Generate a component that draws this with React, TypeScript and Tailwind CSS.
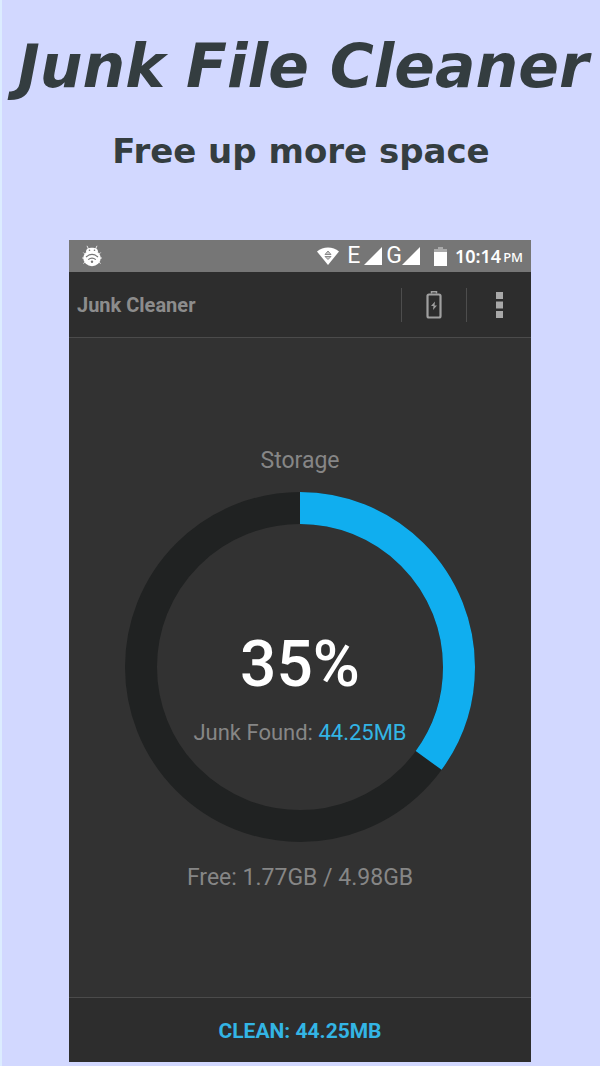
const USED_PERCENT = 35;
const JUNK_SIZE = "44.25MB";

function BugIcon() {
  return (
    <svg viewBox="0 0 22 24" className="h-6 w-[22px]" aria-hidden="true">
      <g stroke="#e4e4e4" strokeWidth="1" fill="none">
        <path d="M6 1.800l1.800 4M16 1.800l-1.800 4M2.300 8.500l2 2M19.700 8.500l-2 2M1 14h2M21 14h-2M2.300 19.500l2-1.500M19.700 19.500l-2-1.500" />
      </g>
      <path d="M5 8C5 4.500 8 3.800 11 3.800S17 4.500 17 8z" fill="#fff" />
      <ellipse cx="11" cy="14.200" rx="8.700" ry="8" fill="#fff" />
      <g stroke="#767676" strokeWidth="1.200" fill="none">
        <path d="M5 13c3.800-3.200 8.200-3.200 12 0M7.200 15.600c2.400-2 5.200-2 7.600 0" />
      </g>
      <circle cx="11" cy="17.800" r="1.200" fill="#767676" />
      <circle cx="8.500" cy="6.300" r=".8" fill="#767676" />
      <circle cx="13.500" cy="6.300" r=".8" fill="#767676" />
    </svg>
  );
}

function WifiIcon() {
  return (
    <svg viewBox="0 0 22 18" className="h-[18px] w-[22px]" aria-hidden="true">
      <path d="M0 4.500C6-1 16-1 22 4.500L11 18z" fill="#fff" />
      <path d="M11 4l3 3.500H8zM8 9.500h6l-3 3z" fill="#c4c4c4" stroke="#8a8a8a" strokeWidth="1" />
    </svg>
  );
}

function SignalIcon() {
  return (
    <svg viewBox="0 0 18 18" className="h-[18px] w-[18px]" aria-hidden="true">
      <path d="M18 0v18H0z" fill="#fff" />
    </svg>
  );
}

function StatusBatteryIcon() {
  return (
    <svg viewBox="0 0 13 19" className="h-[19px] w-[13px]" aria-hidden="true">
      <path d="M4 0h5v2h4v4H0V2h4z" fill="#aaa" />
      <path d="M0 5h13v14H0z" fill="#fff" />
    </svg>
  );
}

function BatteryIcon() {
  return (
    <svg viewBox="0 0 16 28" className="h-7 w-4" aria-hidden="true">
      <g fill="none" stroke="#a0a0a0">
        <rect x="1.500" y="3.500" width="13" height="23" rx="1.500" strokeWidth="2.200" />
        <path d="M5.500 2.500V.8h5v1.700" strokeWidth="1.500" />
      </g>
      <path d="M9 10.500l-4 4.500h2.500L7 19l4-4.500H8.500z" fill="#a0a0a0" />
    </svg>
  );
}

function MoreIcon() {
  return (
    <svg viewBox="0 0 7 26" className="h-[26px] w-[7px]" aria-hidden="true">
      <path d="M0 0h7v7H0zM0 9.500h7v7H0zM0 19h7v7H0z" fill="#a8a8a8" />
    </svg>
  );
}

function StatusBar() {
  return (
    <div className="flex h-8 items-center justify-between bg-[#767676] pl-3 pr-2 font-['Noto_Sans',sans-serif] text-white">
      <BugIcon />
      <div className="flex items-center">
        <WifiIcon />
        <span className="ml-2 font-[Roboto,sans-serif] text-[23px] leading-8">E</span>
        <span className="ml-1">
          <SignalIcon />
        </span>
        <span className="ml-1 font-[Roboto,sans-serif] text-[23px] leading-8">G</span>
        <SignalIcon />
        <span className="ml-3.5 mr-2">
          <StatusBatteryIcon />
        </span>
        <span className="text-[18px] font-semibold leading-8">10:14</span>
        <span className="ml-0.5 pt-1 text-[13px] font-medium">PM</span>
      </div>
    </div>
  );
}

function Toolbar() {
  return (
    <header className="flex h-[66px] items-center border-b border-[#4b4b4b] bg-[#2d2d2d] pl-2">
      <h2 className="flex-1 pt-px text-[20px] font-bold text-[#8c8c8c]">Junk Cleaner</h2>
      <button
        type="button"
        aria-label="Battery"
        className="flex h-[34px] w-[65px] items-center justify-center border-l border-[#4d4d4d]"
      >
        <BatteryIcon />
      </button>
      <button
        type="button"
        aria-label="More options"
        className="flex h-[34px] w-[65px] items-center justify-center border-l border-[#4d4d4d]"
      >
        <MoreIcon />
      </button>
    </header>
  );
}

function StorageRing({ percent }: { percent: number }) {
  return (
    <div className="grid place-items-center">
      <svg viewBox="0 0 350 350" className="col-start-1 row-start-1 size-[350px]" aria-hidden="true">
        <g fill="none" strokeWidth="32" transform="rotate(-90 175 175)">
          <circle cx="175" cy="175" r="159" stroke="#202222" />
          <circle
            cx="175"
            cy="175"
            r="159"
            stroke="#10aeef"
            pathLength="100"
            strokeDasharray={`${percent} 100`}
          />
        </g>
      </svg>
      <div className="col-start-1 row-start-1 flex flex-col items-center pt-10">
        <p className="text-[64px] font-medium leading-[76px] text-white">{percent}%</p>
        <p className="mt-4 text-[22px] leading-7">
          Junk Found: <span className="text-[#33b5e5]">{JUNK_SIZE}</span>
        </p>
      </div>
    </div>
  );
}

export default function App() {
  return (
    <div className="border-l-2 border-[#dcecff] bg-[#d2d8ff] pb-1">
      <div className="flex h-60 flex-col items-center whitespace-nowrap font-['DejaVu_Sans',sans-serif] font-bold text-[#343d40]">
        <h1 className="pl-1 pt-7 text-[60px] italic leading-[76px]">Junk File Cleaner</h1>
        <p className="mt-6 text-[34px] leading-[46px]">Free up more space</p>
      </div>

      <main className="ml-[67px] mr-[69px] flex flex-col bg-[#323232] font-[Roboto,sans-serif] text-[#868686]">
        <StatusBar />
        <Toolbar />
        <section className="flex flex-col items-center pb-[104px] pt-[108px]">
          <h3 className="mb-4 text-[23px] leading-[30px]">Storage</h3>
          <StorageRing percent={USED_PERCENT} />
          <p className="mt-[21px] text-[23px] leading-[30px]">Free: 1.77GB / 4.98GB</p>
        </section>
        <button
          type="button"
          className="h-[65px] border-t border-[#4b4b4b] bg-[#2d2d2d] pt-1 text-[21px] font-bold text-[#33b5e5]"
        >
          CLEAN: {JUNK_SIZE}
        </button>
      </main>
    </div>
  );
}
